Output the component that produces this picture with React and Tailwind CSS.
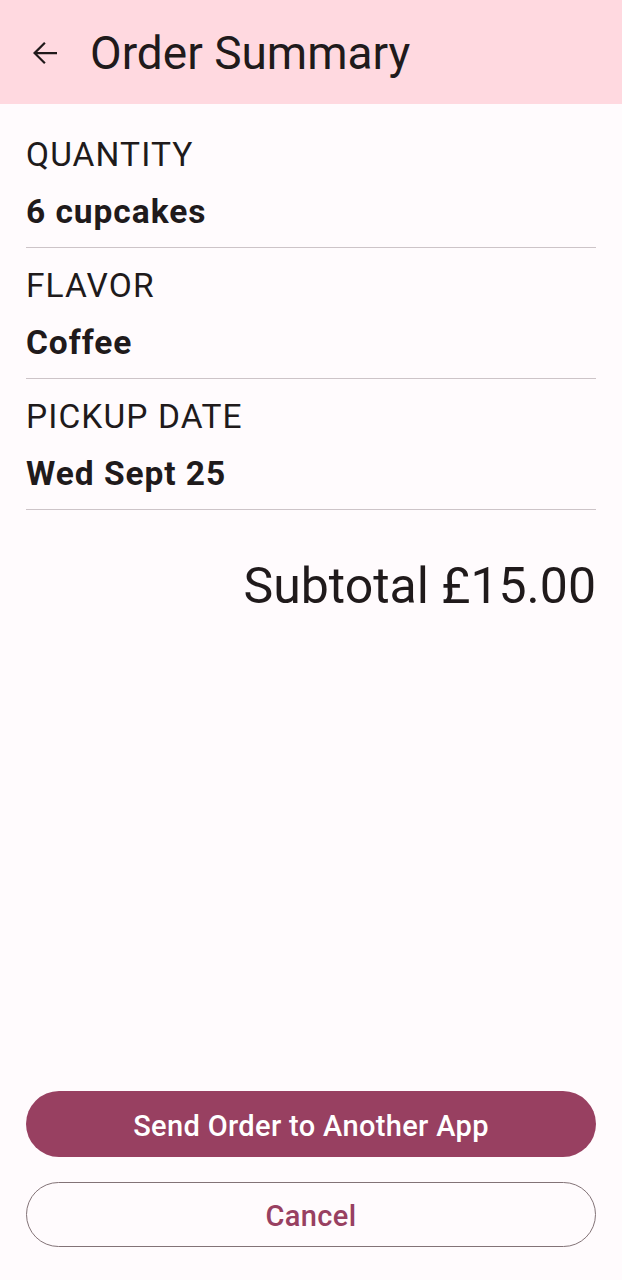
import React from 'react'

const rows = [
  { label: 'QUANTITY', value: '6 cupcakes' },
  { label: 'FLAVOR', value: 'Coffee' },
  { label: 'PICKUP DATE', value: 'Wed Sept 25' },
]

function BackArrow() {
  return (
    <svg width="36" height="36" viewBox="0 0 24 24" fill="#201a1b">
      <path d="M20 11.25H6.85l5.6-5.6-1.05-1.05L4 12l7.4 7.4 1.05-1.05-5.6-5.6H20z" />
    </svg>
  )
}

export default function App() {
  return (
    <div className="w-[622px] h-[1280px] flex flex-col bg-[#fffbfd] text-[#201a1b]" style={{ fontFamily: 'Roboto, "Liberation Sans", sans-serif' }}>
      {/* Top bar */}
      <div className="h-[104px] shrink-0 bg-[#ffd9e0] flex items-start">
        <div className="ml-[27px] mt-[35px]">
          <BackArrow />
        </div>
        <h1 className="ml-[27px] mt-[25px] text-[46px] leading-[56px] font-normal">Order Summary</h1>
      </div>

      {/* Details */}
      <div className="px-[26px] pt-[26px] flex flex-col">
        {rows.map((r, i) => (
          <div key={r.label} className={i > 0 ? 'mt-[13px]' : ''}>
            <p className="text-[33.5px] leading-[50px] tracking-[1.1px]">{r.label}</p>
            <p className="mt-[7px] text-[33.5px] leading-[50px] font-bold tracking-[0.95px]">{r.value}</p>
            <div className="mt-[10px] h-px bg-[#cdc4c8]" />
          </div>
        ))}
        <p className="mt-[46px] text-right text-[50px] leading-[60px]">Subtotal £15.00</p>
      </div>

      {/* Actions */}
      <div className="mt-auto px-[26px] pb-[33px] flex flex-col gap-[25px]">
        <button className="h-[66px] pt-[5px] rounded-full bg-[#984061] text-white text-[29px] font-medium tracking-[0.35px]">
          Send Order to Another App
        </button>
        <button className="h-[65px] pt-[5px] rounded-full border-[1.5px] border-[#837377] text-[#984061] text-[29px] font-medium tracking-[0.35px]">
          Cancel
        </button>
      </div>
    </div>
  )
}
